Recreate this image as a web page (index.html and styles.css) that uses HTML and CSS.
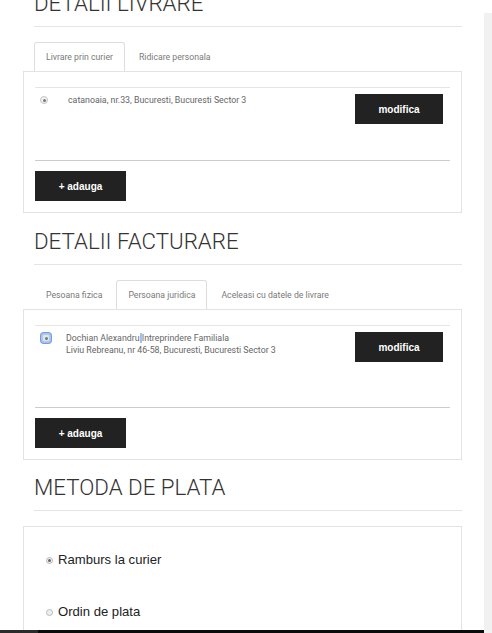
FILE: index.html
```html
<!DOCTYPE html>
<html lang="ro">
<head>
<meta charset="utf-8">
<title>Checkout</title>
<link rel="stylesheet" href="styles.css">
</head>
<body>
<div class="layout">
  <main class="main">
    <h2 class="heading heading--first">DETALII LIVRARE</h2>
    <ul class="tabs">
      <li class="tab tab--active">Livrare prin curier</li>
      <li class="tab">Ridicare personala</li>
    </ul>
    <div class="panel">
      <div class="addr-list">
        <div class="addr-row">
          <span class="radio radio--checked"></span>
          <div class="addr-text">catanoaia, nr.33, Bucuresti, Bucuresti Sector 3</div>
          <button class="btn btn--edit">modifica</button>
        </div>
      </div>
      <button class="btn btn--add">+ adauga</button>
    </div>

    <h2 class="heading heading--second">DETALII FACTURARE</h2>
    <ul class="tabs">
      <li class="tab">Pesoana fizica</li>
      <li class="tab tab--active">Persoana juridica</li>
      <li class="tab">Aceleasi cu datele de livrare</li>
    </ul>
    <div class="panel">
      <div class="addr-list addr-list--tall">
        <div class="addr-row addr-row--focus">
          <span class="radio radio--checked radio--focus"></span>
          <div class="addr-text">Dochian Alexandru<span class="sel"> </span>Intreprindere Familiala<br>Liviu Rebreanu, nr 46-58, Bucuresti, Bucuresti Sector 3</div>
          <button class="btn btn--edit">modifica</button>
        </div>
      </div>
      <button class="btn btn--add">+ adauga</button>
    </div>

    <h2 class="heading heading--third">METODA DE PLATA</h2>
    <div class="panel panel--pay">
      <label class="pay-option"><span class="radio radio--small radio--checked"></span>Ramburs la curier</label>
      <label class="pay-option"><span class="radio radio--small"></span>Ordin de plata</label>
    </div>
  </main>
  <div class="scroll-track"></div>
</div>
<div class="taskbar"></div>
</body>
</html>
```
FILE: styles.css
```css
* { box-sizing: border-box; }
html, body { margin: 0; padding: 0; background: #fff; }
body {
  font-family: Roboto, "Liberation Sans", sans-serif;
  color: #333;
  height: 633px;
  overflow: hidden;
}
.layout { display: flex; height: 633px; }
.main { width: 484px; padding: 0 22px 0 34px; }
.scroll-track { width: 8px; margin-top: 13px; background: #f1f1f1; }

.heading {
  margin: 16px 0 0;
  font-weight: 300;
  font-size: 22.3px;
  line-height: 25px;
  padding-bottom: 10px;
  border-bottom: 1px solid #e5e5e5;
  color: #333;
}
.heading--first { margin-top: -9px; }
.heading--second { margin-top: 16px; }
.heading--third { margin-top: 15px; }

.tabs { list-style: none; margin: 15px 0 0; padding: 0; display: flex; gap: 2px; }
.tab {
  height: 29px;
  padding: 0 11px;
  border: 1px solid transparent;
  border-bottom: 0;
  line-height: 28px;
  font-size: 8.7px;
  color: #7a7a7a;
  white-space: nowrap;
}
.tab--active { border-color: #dddddd; border-radius: 3px 3px 0 0; background: #fff; }

.panel {
  margin-left: -11px;
  border: 1px solid #e3e3e3;
  padding: 15px 11px 11px;
}
.addr-list {
  border-top: 1px solid #e5e5e5;
  border-bottom: 1px solid #cccccc;
  min-height: 74px;
}
.addr-list--tall { min-height: 83px; }
.addr-row { display: flex; align-items: flex-start; padding: 6px 6px 0 5px; }
.addr-row--focus { padding-left: 7px; }
.addr-row--focus .addr-text { margin-left: 16px; }
.addr-text { margin-left: 20px; font-size: 8.8px; line-height: 12px; color: #666; }
.sel { background: #9fc3f2; }

.radio {
  flex: none;
  width: 8px;
  height: 8px;
  margin-top: 2px;
  border-radius: 50%;
  border: 1px solid #c4c4c4;
  background: #f4f4f4;
  position: relative;
}
.radio--checked::after {
  content: "";
  position: absolute;
  left: 1.5px; top: 1.5px;
  width: 3px; height: 3px;
  border-radius: 50%;
  background: #777;
}
.radio--focus { box-shadow: 0 0 0 1px #a9c6f0, 0 0 0 2px #6d9ee6; border-radius: 2px; background: #dbe7f8; }

.btn {
  border: 0;
  background: #222;
  color: #fff;
  font-family: "Liberation Sans", Arial, sans-serif;
  font-weight: bold;
  font-size: 10px;
  height: 30px;
  padding: 0;
  display: block;
}
.btn--edit { width: 88px; margin-left: auto; margin-right: 1px; }
.btn--add { width: 91px; margin-top: 10px; }

.panel--pay { margin-top: 15px; height: 200px; padding: 25px 22px 0; }
.pay-option {
  display: flex;
  align-items: center;
  gap: 5px;
  font-family: "Liberation Sans", Arial, sans-serif;
  font-size: 13.1px;
  line-height: 16px;
  color: #222;
  margin-bottom: 36px;
}
.radio--small { width: 7px; height: 7px; margin-top: 0; border-color: #bbb; background: #eee; }
.radio--small.radio--checked::after { left: 1px; top: 1px; width: 3px; height: 3px; background: #666; }

.taskbar {
  position: fixed;
  left: 0; bottom: 0;
  width: 484px;
  height: 3px;
  background: linear-gradient(to right, #2b2b2b 0, #2b2b2b 38px, #0b0b0b 38px);
}
```
